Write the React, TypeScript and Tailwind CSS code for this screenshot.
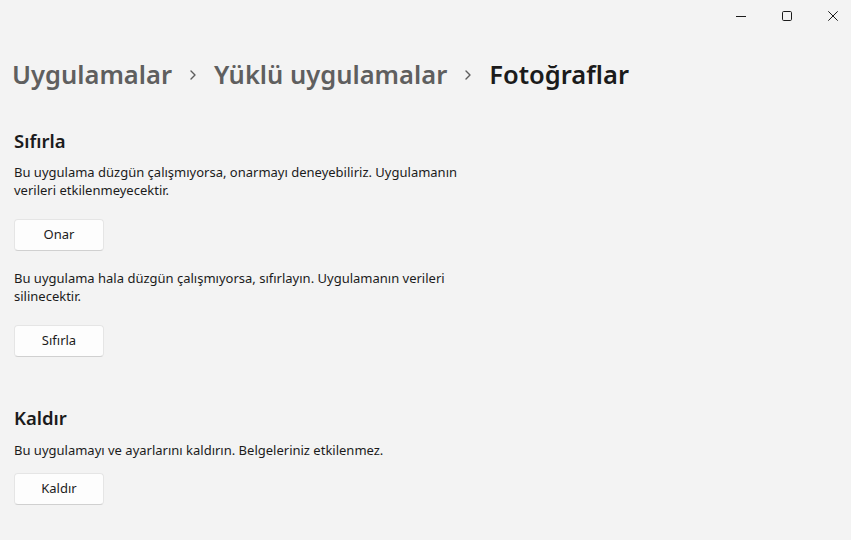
import React from 'react';

function CaptionButtons() {
  return (
    <div className="flex h-8 justify-end -mr-[5px]">
      <button className="flex h-8 w-[46px] items-center justify-center">
        <svg width="10" height="10" viewBox="0 0 10 10">
          <path d="M0 5.5h10" stroke="#1b1b1b" strokeWidth="1" />
        </svg>
      </button>
      <button className="flex h-8 w-[46px] items-center justify-center">
        <svg width="10" height="10" viewBox="0 0 10 10">
          <rect x="0.5" y="0.5" width="9" height="9" rx="1.2" fill="none" stroke="#1b1b1b" strokeWidth="1" />
        </svg>
      </button>
      <button className="flex h-8 w-[46px] items-center justify-center">
        <svg width="10" height="10" viewBox="0 0 10 10">
          <path d="M0.3 0.3l9.4 9.4M9.7 0.3L0.3 9.7" stroke="#1b1b1b" strokeWidth="1" />
        </svg>
      </button>
    </div>
  );
}

function Chevron() {
  return (
    <svg width="12" height="12" viewBox="0 0 12 12" className="mx-[15px] mt-[2px]">
      <path d="M4 2l4 4-4 4" fill="none" stroke="#5d5d5d" strokeWidth="1.4" strokeLinecap="round" strokeLinejoin="round" />
    </svg>
  );
}

function ActionButton({ label }: { label: string }) {
  return (
    <button className="h-8 w-[90px] rounded-[4px] border border-[#e5e5e5] border-b-[#d0d0d0] bg-[#fdfdfd] text-[13px] text-[#1b1b1b]">
      {label}
    </button>
  );
}

export default function App() {
  return (
    <div
      className="h-[540px] w-[851px] overflow-hidden bg-[#f3f3f3] text-[#1b1b1b]"
      style={{ fontFamily: '"Noto Sans", "Open Sans", sans-serif' }}
    >
      <CaptionButtons />

      {/* breadcrumb header */}
      <div className="mt-6 flex items-center pl-[12px] text-[25.5px] font-semibold leading-9">
        <span className="text-[#5f5f5f]">Uygulamalar</span>
        <Chevron />
        <span className="text-[#5f5f5f]">Yüklü uygulamalar</span>
        <Chevron />
        <span className="text-[#1b1b1b]">Fotoğraflar</span>
      </div>

      <div className="pl-[14px]">
        <h2 className="mt-[35px] text-[18.5px] font-semibold leading-7">Sıfırla</h2>
        <p className="mt-2 max-w-[455px] text-[13px] leading-[18px]">
          Bu uygulama düzgün çalışmıyorsa, onarmayı deneyebiliriz. Uygulamanın verileri etkilenmeyecektir.
        </p>
        <div className="mt-5">
          <ActionButton label="Onar" />
        </div>
        <p className="mt-[18px] max-w-[455px] text-[13px] leading-[18px]">
          Bu uygulama hala düzgün çalışmıyorsa, sıfırlayın. Uygulamanın verileri silinecektir.
        </p>
        <div className="mt-5">
          <ActionButton label="Sıfırla" />
        </div>

        <h2 className="mt-[47px] text-[18.5px] font-semibold leading-7">Kaldır</h2>
        <p className="mt-[9px] text-[13px] leading-[18px]">
          Bu uygulamayı ve ayarlarını kaldırın. Belgeleriniz etkilenmez.
        </p>
        <div className="mt-[14px]">
          <ActionButton label="Kaldır" />
        </div>
      </div>
    </div>
  );
}
